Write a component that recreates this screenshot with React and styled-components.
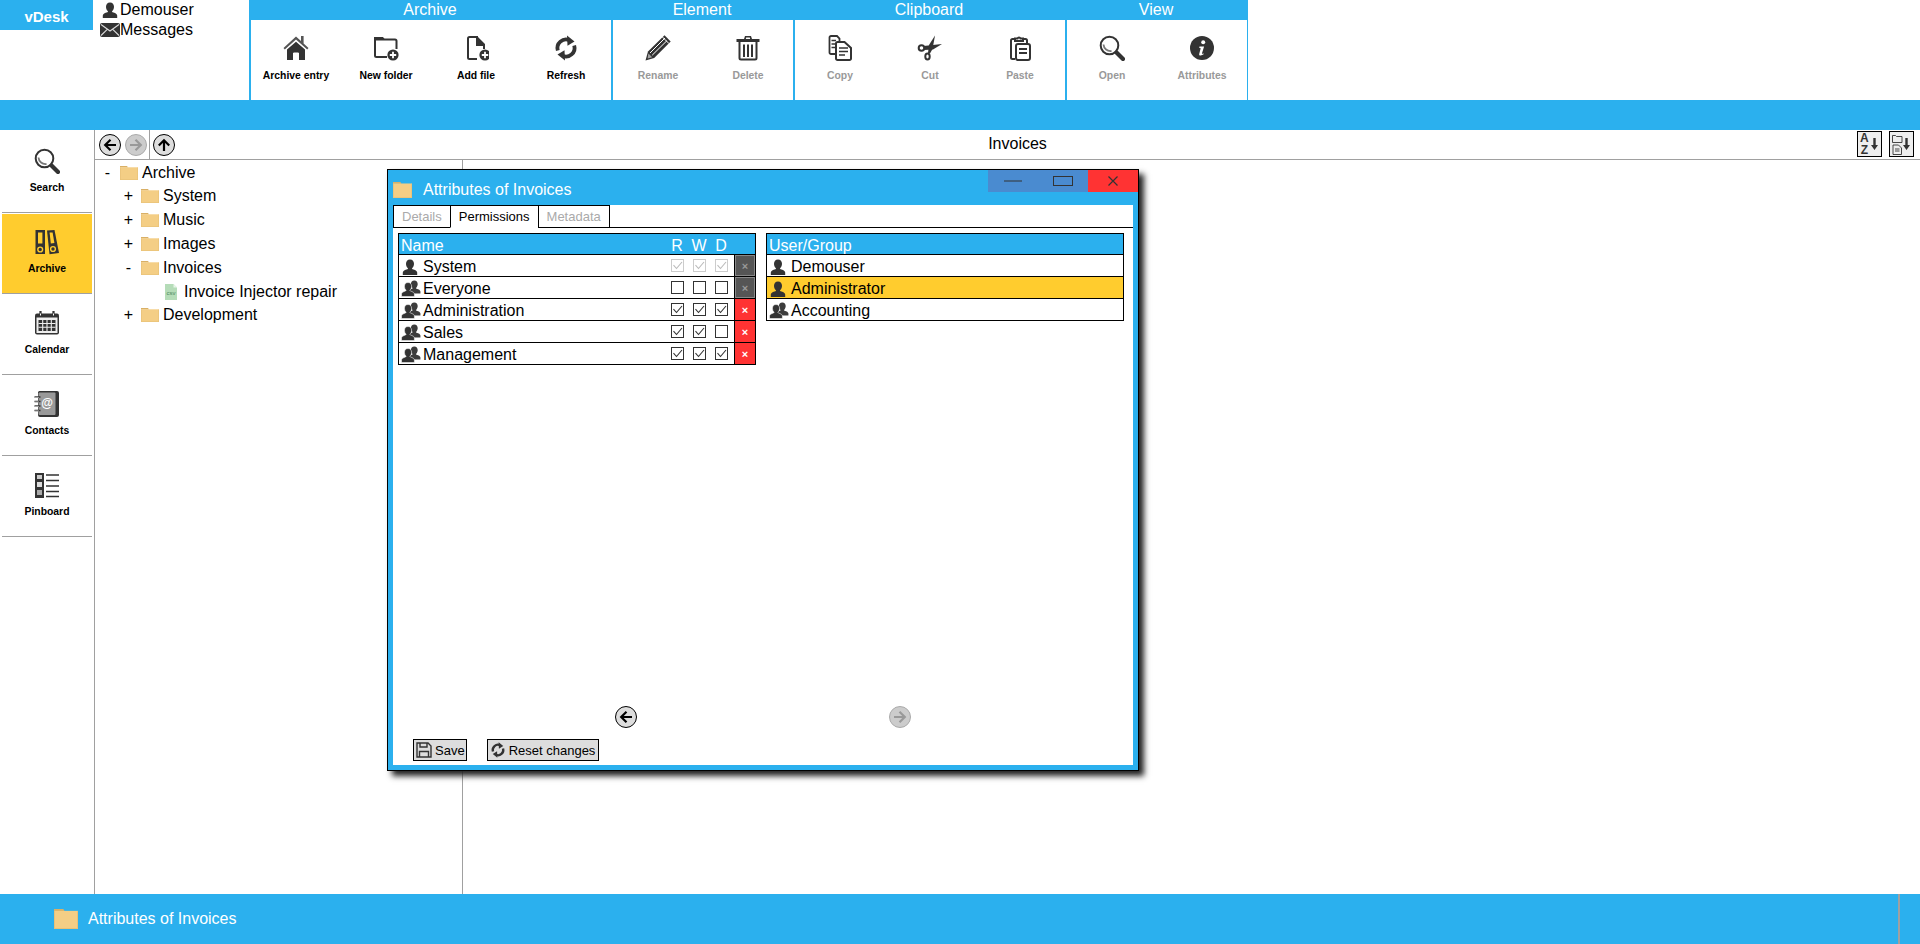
import React from "react";
import styled, { createGlobalStyle } from "styled-components";

const BLUE = "#2bb0ee";
const YELLOW = "#ffcc2e";
const RED = "#ff3333";
const GREY = "#a0a0a0";
const INK = "#333333";

const GlobalStyle = createGlobalStyle`
  html, body {
    margin: 0;
    padding: 0;
    height: 100%;
    background: #fff;
    overflow: hidden;
  }
  body {
    font-family: "Liberation Sans", Arial, sans-serif;
    font-size: 16px;
    color: #000;
  }
  * { box-sizing: border-box; }
`;

const Glyph = styled.svg.attrs((p) => ({
  width: p.$w || p.$size || 26,
  height: p.$size || 26,
  viewBox: p.$box || "0 0 26 26",
}))`
  display: block;
  flex: none;
  color: ${INK};
`;

/* ---- icons ---- */
const HomeIcon = () => (
  <Glyph>
    <path fill="#555" d="M13 1.500 18 6V1h2.600v7.400L25.500 13l-1.300 1.600L13 4.600 1.800 14.600.5 13z" />
    <path fill={INK} d="M4 14.500 13 6.700l9 7.800V25h-6v-7h-6v7H4z" />
    <rect fill="#fff" x="10.500" y="17.500" width="5" height="7.500" />
  </Glyph>
);

const Badge = () => (
  <g>
    <circle cx="20" cy="20" r="5.600" fill={INK} />
    <path stroke="#fff" strokeWidth="1.800" d="M16.800 20h6.400M20 16.800v6.400" />
  </g>
);

const NewFolderIcon = () => (
  <Glyph>
    <path fill={INK} d="M1 2h9l2 2.500H2.600L2 5H1z" />
    <path fill="none" stroke={INK} strokeWidth="2" d="M2 4.500V20.500a1.500 1.500 0 0 0 1.500 1.500H14M2 4.500h20a1.500 1.500 0 0 1 1.500 1.500V14" />
    <Badge />
  </Glyph>
);

const AddFileIcon = () => (
  <Glyph>
    <path fill="none" stroke={INK} strokeWidth="2" d="M15 2H6.500A1.500 1.500 0 0 0 5 3.500v19A1.500 1.500 0 0 0 6.500 24H14" />
    <path fill={INK} d="M13 2h2l7 7v5h-2v-3h-7z" />
    <g transform="translate(2 0)"><Badge /></g>
  </Glyph>
);

const RefreshIcon = ({ size = 26 }) => (
  <Glyph $size={size}>
    <path fill="none" stroke={INK} strokeWidth="3.800" d="M4.800 15.500A8.600 8.600 0 0 1 16.500 5.200" />
    <path fill={INK} d="M14 .5 21.500 6.500 14.500 10.800z" />
    <path fill="none" stroke={INK} strokeWidth="3.800" d="M21.200 10.500A8.600 8.600 0 0 1 9.500 20.800" />
    <path fill={INK} d="M12 25.500 4.500 19.500 11.500 15.200z" />
  </Glyph>
);

const PencilIcon = () => (
  <Glyph>
    <path fill={INK} d="M.5 25.500 3 16.500 19.500 .3 25.700 6.500 9.200 23z" />
    <path stroke="#fff" strokeWidth="1" d="M5 18 20 3M7.200 20.200 22 5.600M17 1.600 24 8.600" />
    <path fill="#fff" d="M3.400 18.400 7.200 22.200 2.600 23.400z" opacity=".55" />
  </Glyph>
);

const TrashIcon = () => (
  <Glyph>
    <path fill={INK} d="M10 1h6l1 3h7.500v3h-23V4H9zm1.200 1.600-.4 1.400h4.400l-.4-1.400z" />
    <path fill="none" stroke={INK} strokeWidth="2" d="M4.500 7V23a1.500 1.500 0 0 0 1.500 1.500h14a1.500 1.500 0 0 0 1.500-1.500V7" />
    <path stroke={INK} strokeWidth="2" d="M9 9.500V22M13 9.500V22M17 9.500V22" />
  </Glyph>
);

const CopyIcon = () => (
  <Glyph>
    <path fill="none" stroke={INK} strokeWidth="1.800" d="M9 19H4a1.500 1.500 0 0 1-1.500-1.500v-15A1.500 1.500 0 0 1 4 1h6l2.500 2.500V7" />
    <path fill="none" stroke={INK} strokeWidth="2" d="M10.500 7h7L24 13v10.500a1.500 1.500 0 0 1-1.500 1.500h-12A1.500 1.500 0 0 1 9 23.500v-15A1.500 1.500 0 0 1 10.500 7z" />
    <path stroke={INK} strokeWidth="1.600" d="M4.500 5.500H9M4.500 9H8M4.500 12.500H8M12 13h9M12 16.500h9M12 20h6" />
  </Glyph>
);

const CutIcon = () => (
  <Glyph>
    <circle cx="4.500" cy="13" r="2.800" fill="none" stroke={INK} strokeWidth="2" />
    <ellipse cx="10.500" cy="21.500" rx="2.200" ry="3" fill="none" stroke={INK} strokeWidth="2" />
    <path fill={INK} d="M6.500 11 25 9 16 14.500 7.200 15z" />
    <path fill={INK} d="M11 18 12 10 18 .5 15.500 14 13 18.500z" />
  </Glyph>
);

const PasteIcon = () => (
  <Glyph>
    <path fill="none" stroke={INK} strokeWidth="2" d="M8 24H5.500A1.500 1.500 0 0 1 4 22.500v-17A1.500 1.500 0 0 1 5.500 4H8M16 4h2.500A1.500 1.500 0 0 1 20 5.500V8" />
    <path fill="none" stroke={INK} strokeWidth="2" d="M8 6V3.500h2.500a1.600 1.600 0 0 1 3 0H16V6z" />
    <rect x="9" y="9" width="14" height="16" rx="2" fill="#fff" stroke={INK} strokeWidth="2" />
    <path stroke={INK} strokeWidth="1.800" d="M12 14h8M12 18h8" />
  </Glyph>
);

const SearchIcon = () => (
  <Glyph>
    <circle cx="10.500" cy="10.500" r="8.800" fill="none" stroke={INK} strokeWidth="2" />
    <path fill="none" stroke="#777" strokeWidth="1.800" d="M4.500 9.500a7 7 0 0 0 8 6.500" />
    <path stroke={INK} strokeWidth="4.200" strokeLinecap="round" d="M17.500 17.500 24 24" />
  </Glyph>
);

const InfoIcon = () => (
  <Glyph>
    <circle cx="13" cy="13" r="12" fill={INK} />
    <circle cx="14.200" cy="7.200" r="2" fill="#fff" />
    <path fill="#fff" d="M10.500 11.500h4.600L13 18.200c-.2.700.3.900 1.500.2l.4.700c-1.800 1.600-5.200 2.300-4.700-.2l1.500-5.700-1.500-.4z" />
  </Glyph>
);

const BinderIcon = () => (
  <Glyph>
    <path fill={INK} d="M1.500 1H11v24H1.500z" />
    <path fill={INK} d="M13 1.500 20.500 1 25 24l-9.500 1.200z" />
    <rect x="4" y="3.500" width="4.400" height="11" fill={YELLOW} />
    <path fill={YELLOW} d="M15.600 3.600 18.600 3.400 20.400 14 16.800 14.400z" />
    <circle cx="6.200" cy="20.500" r="2.400" fill="none" stroke={YELLOW} strokeWidth="1.400" />
    <circle cx="19" cy="20" r="2.400" fill="none" stroke={YELLOW} strokeWidth="1.400" />
  </Glyph>
);

const CalendarIcon = () => (
  <Glyph>
    <rect x="1" y="3.500" width="24" height="21" rx="2" fill={INK} />
    <rect x="2.500" y="7.500" width="21" height="15.500" fill="#eee" />
    <path stroke={INK} strokeWidth="2.200" d="M6.500 1v5M19.500 1v5" />
    <path stroke="#fff" strokeWidth="1" d="M6.500 3.500v2M19.500 3.500v2" />
    <rect x="4.500" y="10" width="17" height="11" fill={INK} />
    <path stroke="#eee" strokeWidth="1.100" d="M4.500 13.500h17M4.500 17.300h17M8.700 10v11M13 10v11M17.300 10v11" />
  </Glyph>
);

const ContactsIcon = () => (
  <Glyph>
    <path fill={INK} d="M4 1.500A1.500 1.500 0 0 1 5.500 0H23a2 2 0 0 1 2 2v22a2 2 0 0 1-2 2H6a2 2 0 0 1-2-2z" />
    <rect x="4.500" y="1.500" width="17" height="22.500" rx="1" fill="#999" />
    <text x="13" y="16" textAnchor="middle" fontSize="12" fontFamily="Liberation Sans" fill="#fff">@</text>
    <path stroke={INK} strokeWidth="1.700" d="M.5 6h6M.5 10.500h6M.5 15h6M.5 19.500h6" />
    <path stroke="#ccc" strokeWidth=".7" d="M1 6.400h4M1 10.900h4M1 15.400h4M1 19.900h4" />
  </Glyph>
);

const PinboardIcon = () => (
  <Glyph>
    <rect x="1" y="1" width="9" height="25" fill={INK} />
    <rect x="3" y="3" width="5" height="4" fill="#ccc" />
    <rect x="3" y="10" width="5" height="5" fill="#ddd" />
    <rect x="3" y="18" width="5" height="5" fill="#aaa" />
    <path stroke={INK} strokeWidth="1.500" d="M12 3h13M12 8.500h13M12 14h13M12 19.500h13M12 24.500h13" />
  </Glyph>
);

const PersonShape = ({ dx = 0, scale = 1, fill = INK }) => (
  <path
    transform={`translate(${dx} 0) scale(${scale})`}
    fill={fill}
    d="M8 .5c2.600 0 4 2 4 4.300 0 1.800-.7 3.300-1.700 4.200-.4.400-.3 1 .3 1.200 2.500.7 4.600 1.700 4.600 3.300V16H.8v-2.500c0-1.600 2.100-2.600 4.600-3.300.6-.2.700-.8.3-1.200C4.700 8.100 4 6.600 4 4.800 4 2.500 5.400.5 8 .5z"
  />
);

const PersonIcon = () => (
  <Glyph $w={22} $size={16} $box="-3 0 22 16">
    <PersonShape />
  </Glyph>
);

const GroupIcon = () => (
  <Glyph $w={22} $size={17} $box="-2 0 22 17">
    <PersonShape dx={6.500} scale={0.85} fill="#3c3c3c" />
    <path transform="translate(0 2.500) scale(1.080)" fill={INK} stroke="#fff" strokeWidth=".5" d="M6.500 0c2.100 0 3.300 1.600 3.300 3.500 0 1.500-.6 2.700-1.400 3.400-.3.300-.2.800.3 1 2 .6 3.700 1.400 3.700 2.600V13H.5v-2.500c0-1.200 1.700-2 3.700-2.600.5-.2.600-.7.3-1C3.700 6.200 3.200 5 3.200 3.500 3.200 1.600 4.400 0 6.500 0z" />
  </Glyph>
);

const MailIcon = () => (
  <Glyph $w={20} $size={14} $box="0 0 20 14">
    <rect width="20" height="14" rx="2" fill={INK} />
    <path fill="none" stroke="#ddd" strokeWidth="1.100" d="M1 1.500 10 8l9-6.500M1 12.500 7.500 6.200M19 12.500 12.500 6.200" />
  </Glyph>
);

const FolderIcon = ({ w = 18, h = 14 }) => (
  <Glyph $w={w} $size={h} $box="0 0 18 14" preserveAspectRatio="none">
    <path fill="#d9b066" d="M0 0h7l1 1.500H0z" />
    <rect y="1.300" width="18" height="12.700" fill="#f4ce85" />
    <path stroke="#e4bc72" strokeWidth=".6" fill="none" d="M.3 1.500v12.200h17.400V1.500" />
  </Glyph>
);

const CsvIcon = () => (
  <Glyph $w={12} $size={16} $box="0 0 12 16">
    <path fill="#b5dcb8" d="M0 0h8.500L12 3.500V16H0z" />
    <path fill="#e8f5e8" d="M8.500 0 12 3.500H8.500z" />
    <text x="6" y="10.500" textAnchor="middle" fontSize="6" fontFamily="Liberation Sans" fill="#4d8a60">csv</text>
  </Glyph>
);

const ArrowIcon = ({ dir, color }) => {
  const angle = { left: 0, right: 180, up: 90 }[dir];
  return (
    <Glyph $size={14} $box="0 0 14 14">
      <g transform={`rotate(${angle} 7 7)`} fill="none" stroke={color} strokeWidth="2.200">
        <path d="M2 7h11M7.500 1.800 2.200 7l5.300 5.200" />
      </g>
    </Glyph>
  );
};

const CheckMark = ({ color }) => (
  <Glyph $size={11} $box="0 0 11 11">
    <path fill="none" stroke={color} strokeWidth="1.100" d="M1.500 5.200 4.500 8.500 10 2" />
  </Glyph>
);

const FloppyIcon = () => (
  <Glyph $size={16} $box="0 0 16 16">
    <path fill="none" stroke={INK} strokeWidth="1.400" d="M1 1h11l3 3v11H1z" />
    <path fill="none" stroke={INK} strokeWidth="1.400" d="M4 1v4h7V1M3.500 15V9.500h9V15" />
  </Glyph>
);

const SortArrow = () => (
  <Glyph $w={7} $size={12} $box="0 0 7 12">
    <path fill={INK} d="M2.300 0h2.400v7H7l-3.500 5L0 7h2.300z" />
  </Glyph>
);

const TypeStack = () => (
  <Glyph $w={11} $size={22} $box="0 0 11 22">
    <path fill="none" stroke={INK} strokeWidth=".9" d="M.5 2.500V9.500h9.500V3.500H4.500l-1-1z" />
    <path fill="none" stroke={INK} strokeWidth=".9" d="M1 12h5.500L9.500 15v6.500H1z" />
    <path stroke={INK} strokeWidth=".9" d="M3 16h4.500M3 18h4.500" />
  </Glyph>
);

/* ---- header ---- */
const Page = styled.div`
  display: flex;
  flex-direction: column;
  height: 100vh;
  position: relative;
`;

const Header = styled.header`
  display: flex;
  height: 100px;
  flex: none;
`;

const Brand = styled.div`
  width: 93px;
  height: 30px;
  background: ${BLUE};
  color: #fff;
  font-weight: bold;
  font-size: 15px;
  line-height: 33px;
  text-align: center;
`;

const UserBox = styled.div`
  width: 156px;
  padding-left: 7px;
`;

const UserLine = styled.div`
  display: flex;
  align-items: center;
  height: 20px;
  line-height: 20px;
  gap: ${(p) => (p.$mail ? "0" : "2px")};
  padding-left: ${(p) => (p.$mail ? "0" : "2px")};
`;

const Ribbon = styled.div`
  display: flex;
`;

const RibbonGroup = styled.section`
  display: flex;
  flex-direction: column;
`;

const GroupTitle = styled.div`
  height: 20px;
  background: ${BLUE};
  color: #fff;
  line-height: 19px;
  text-align: center;
`;

const GroupBody = styled.div`
  display: flex;
  flex: 1;
  border-left: 2px solid ${BLUE};
`;

const RibbonButton = styled.div`
  width: 90px;
  display: flex;
  flex-direction: column;
  align-items: center;
  padding-top: 15px;
  font-size: 10.4px;
  font-weight: bold;
  color: ${(p) => (p.$off ? "#999" : "#000")};
`;

const RibbonLabel = styled.span`
  margin-top: 9px;
  line-height: 12px;
  white-space: nowrap;
`;

const RibbonEnd = styled.div`
  width: 1px;
  background: ${BLUE};
`;

const BlueBar = styled.div`
  height: 30px;
  flex: none;
  background: ${BLUE};
`;

/* ---- main ---- */
const Main = styled.div`
  flex: 1;
  display: flex;
  min-height: 0;
`;

const Sidebar = styled.nav`
  width: 95px;
  flex: none;
  padding: 3px 2px 0;
  border-right: 1px solid ${GREY};
`;

const SideItem = styled.div`
  height: 80px;
  width: 90px;
  margin-bottom: 1px;
  display: flex;
  flex-direction: column;
  align-items: center;
  padding-top: 15px;
  border-bottom: 1px solid ${GREY};
  background: ${(p) => (p.$active ? YELLOW : "transparent")};
  font-size: 10.4px;
  font-weight: bold;
`;

const SideLabel = styled.span`
  margin-top: 8px;
  line-height: 12px;
`;

const Content = styled.div`
  flex: 1;
  display: flex;
  flex-direction: column;
  min-width: 0;
`;

const NavBar = styled.div`
  height: 30px;
  flex: none;
  display: grid;
  grid-template-columns: 90px 1fr 70px;
  border-bottom: 1px solid ${GREY};
`;

const NavLeft = styled.div`
  display: flex;
  align-items: center;
  gap: 4px;
  padding-left: 4px;
`;

const NavDivider = styled.span`
  width: 1px;
  height: 100%;
  margin: 0 -1px 0 -2px;
  background: ${GREY};
`;

const RoundButton = styled.span`
  width: 22px;
  height: 22px;
  border-radius: 50%;
  display: flex;
  align-items: center;
  justify-content: center;
  flex: none;
  background: ${(p) => (p.$off ? "#ccc" : "#ddd")};
  border: 1.5px solid ${(p) => (p.$off ? "#aaa" : "#000")};
`;

const NavTitle = styled.div`
  text-align: center;
  line-height: 28px;
`;

const NavRight = styled.div`
  display: flex;
  gap: 7px;
  padding: 1px 0 0 7px;
`;

const SortButton = styled.span`
  width: 25px;
  height: 26px;
  display: flex;
  align-items: center;
  justify-content: space-between;
  padding: 0 3px 0 2px;
  background: #eee;
  border: 1px solid #000;
`;

const SortLetters = styled.span`
  font-size: 12px;
  font-weight: bold;
  line-height: 12px;
  color: ${INK};
  text-align: center;
`;

const Panels = styled.div`
  flex: 1;
  display: flex;
  min-height: 0;
`;

const Tree = styled.div`
  width: 368px;
  flex: none;
  padding-top: 0.8px;
  border-right: 1px solid ${GREY};
`;

const TreeRow = styled.div`
  display: flex;
  align-items: center;
  height: 23.8px;
  padding-left: ${(p) => p.$depth * 21}px;
`;

const Toggle = styled.span`
  width: 25px;
  flex: none;
  text-align: center;
`;

const TreeIcon = styled.span`
  width: 18px;
  flex: none;
  margin-right: 4px;
  display: flex;
  justify-content: center;
`;

const StatusBar = styled.footer`
  height: 50px;
  flex: none;
  background: ${BLUE};
  color: #fff;
  display: flex;
  align-items: center;
  gap: 10px;
  padding: 0 20px 0 54px;
`;

const StatusSpacer = styled.span`
  flex: 1;
`;

const StatusDivider = styled.span`
  width: 2px;
  height: 100%;
  background: ${GREY};
`;

/* ---- dialog ---- */
const Dialog = styled.div`
  position: absolute;
  left: 387px;
  top: 169px;
  width: 752px;
  height: 602px;
  display: flex;
  flex-direction: column;
  padding: 0 5px 5px;
  background: ${BLUE};
  border: 1px solid #000;
  box-shadow: 5px 5px 6px #222;
`;

const TitleBar = styled.div`
  height: 35px;
  flex: none;
  display: flex;
  align-items: flex-start;
  margin-right: -5px;
  color: #fff;
`;

const TitleText = styled.div`
  flex: 1;
  display: flex;
  align-items: center;
  gap: 11px;
  height: 100%;
  padding-top: 4px;
`;

const WindowButton = styled.span`
  width: 50px;
  height: 22px;
  display: flex;
  align-items: center;
  justify-content: center;
  background: ${(p) => (p.$close ? RED : "#4a8bd0")};
`;

const DialogBody = styled.div`
  flex: 1;
  display: flex;
  flex-direction: column;
  padding-bottom: 4px;
  background: #fff;
  min-height: 0;
`;

const Tabs = styled.div`
  display: flex;
  height: 23px;
  flex: none;
  border-bottom: 1px solid #000;
`;

const Tab = styled.span`
  height: 23px;
  padding: 0 8px;
  margin-right: -1px;
  font-size: 13px;
  line-height: 22px;
  border: 1px solid #000;
  border-bottom-color: ${(p) => (p.$active ? "#fff" : "#000")};
  background: #fff;
  color: ${(p) => (p.$active ? "#000" : "#aaa")};
`;

const Tables = styled.div`
  flex: 1;
  display: flex;
  align-items: flex-start;
  gap: 10px;
  padding: 5px 0 0 5px;
`;

const Table = styled.div`
  width: 358px;
  border: 1px solid #000;
  border-bottom: 0;
`;

const Row = styled.div`
  display: grid;
  grid-template-columns: ${(p) => (p.$perms ? "1fr repeat(3, 22px) 23px" : "1fr")};
  grid-template-rows: minmax(0, 1fr);
  height: ${(p) => (p.$head ? 21 : 22)}px;
  border-bottom: 1px solid #000;
  background: ${(p) => (p.$head ? BLUE : p.$selected ? YELLOW : "#fff")};
  color: ${(p) => (p.$head ? "#fff" : "#000")};
`;

const HeadCell = styled.span`
  line-height: 23px;
  padding-left: ${(p) => (p.$center ? 0 : 2)}px;
  text-align: ${(p) => (p.$center ? "center" : "left")};
`;

const NameCell = styled.span`
  display: flex;
  align-items: center;
  gap: 2px;
  padding-top: 2px;
  line-height: 19px;
`;

const CheckCell = styled.span`
  display: flex;
  align-items: center;
  justify-content: center;
`;

const Check = styled.span`
  width: 13px;
  height: 13px;
  display: flex;
  align-items: center;
  justify-content: center;
  border: 1px solid ${(p) => (p.$off ? "#ccc" : INK)};
`;

const RemoveButton = styled.span`
  display: flex;
  align-items: center;
  justify-content: center;
  margin-left: 2px;
  border-left: 1px solid #000;
  background: ${(p) => (p.$off ? "#555" : RED)};
  color: ${(p) => (p.$off ? "#999" : "#fff")};
  box-shadow: ${(p) => (p.$off ? `inset 0 0 0 1px #888` : "none")};
  font-size: 11px;
  font-weight: bold;
`;

const ArrowRow = styled.div`
  display: flex;
  justify-content: space-between;
  padding: 0 222px;
  margin-bottom: 11px;
`;

const Footer = styled.div`
  display: flex;
  gap: 20px;
  padding-left: 20px;
`;

const ActionButton = styled.span`
  height: 22px;
  display: flex;
  align-items: center;
  gap: 3px;
  padding: 0 ${(p) => (p.$wide ? 3 : 1)}px 0 2px;
  background: #ddd;
  border: 1px solid #000;
  font-size: 13px;
`;

/* ---- data ---- */
const ribbon = [
  {
    title: "Archive",
    items: [
      ["Archive entry", HomeIcon],
      ["New folder", NewFolderIcon],
      ["Add file", AddFileIcon],
      ["Refresh", RefreshIcon],
    ],
  },
  { title: "Element", off: true, items: [["Rename", PencilIcon], ["Delete", TrashIcon]] },
  { title: "Clipboard", off: true, items: [["Copy", CopyIcon], ["Cut", CutIcon], ["Paste", PasteIcon]] },
  { title: "View", off: true, items: [["Open", SearchIcon], ["Attributes", InfoIcon]] },
];

const sideItems = [
  ["Search", SearchIcon],
  ["Archive", BinderIcon, true],
  ["Calendar", CalendarIcon],
  ["Contacts", ContactsIcon],
  ["Pinboard", PinboardIcon],
];

const treeRows = [
  { name: "Archive", depth: 0, toggle: "-" },
  { name: "System", depth: 1, toggle: "+" },
  { name: "Music", depth: 1, toggle: "+" },
  { name: "Images", depth: 1, toggle: "+" },
  { name: "Invoices", depth: 1, toggle: "-" },
  { name: "Invoice Injector repair", depth: 2, file: true },
  { name: "Development", depth: 1, toggle: "+" },
];

const permissions = [
  { name: "System", single: true, r: 1, w: 1, d: 1, locked: true },
  { name: "Everyone", r: 0, w: 0, d: 0, locked: true, open: true },
  { name: "Administration", r: 1, w: 1, d: 1 },
  { name: "Sales", r: 1, w: 1, d: 0 },
  { name: "Management", r: 1, w: 1, d: 1 },
];

const people = [
  { name: "Demouser", single: true },
  { name: "Administrator", single: true, selected: true },
  { name: "Accounting" },
];

const CheckBox = ({ on, off }) => (
  <CheckCell>
    <Check $off={off}>{on ? <CheckMark color={off ? "#bbb" : INK} /> : null}</Check>
  </CheckCell>
);

export default function App() {
  return (
    <Page>
      <GlobalStyle />
      <Header>
        <Brand>vDesk</Brand>
        <UserBox>
          <UserLine>
            <Glyph $w={16} $size={16} $box="0 0 16 16"><PersonShape /></Glyph>
            Demouser
          </UserLine>
          <UserLine $mail>
            <MailIcon />
            Messages
          </UserLine>
        </UserBox>
        <Ribbon>
          {ribbon.map((group) => (
            <RibbonGroup key={group.title}>
              <GroupTitle>{group.title}</GroupTitle>
              <GroupBody>
                {group.items.map(([label, Icon]) => (
                  <RibbonButton key={label} $off={group.off}>
                    <Icon />
                    <RibbonLabel>{label}</RibbonLabel>
                  </RibbonButton>
                ))}
              </GroupBody>
            </RibbonGroup>
          ))}
          <RibbonEnd />
        </Ribbon>
      </Header>
      <BlueBar />
      <Main>
        <Sidebar>
          {sideItems.map(([label, Icon, active]) => (
            <SideItem key={label} $active={active}>
              <Icon />
              <SideLabel>{label}</SideLabel>
            </SideItem>
          ))}
        </Sidebar>
        <Content>
          <NavBar>
            <NavLeft>
              <RoundButton><ArrowIcon dir="left" color="#000" /></RoundButton>
              <RoundButton $off><ArrowIcon dir="right" color="#999" /></RoundButton>
              <NavDivider />
              <RoundButton><ArrowIcon dir="up" color="#000" /></RoundButton>
            </NavLeft>
            <NavTitle>Invoices</NavTitle>
            <NavRight>
              <SortButton>
                <SortLetters>A<br />Z</SortLetters>
                <SortArrow />
              </SortButton>
              <SortButton>
                <TypeStack />
                <SortArrow />
              </SortButton>
            </NavRight>
          </NavBar>
          <Panels>
            <Tree>
              {treeRows.map((row) => (
                <TreeRow key={row.name} $depth={row.depth}>
                  <Toggle>{row.toggle}</Toggle>
                  <TreeIcon>{row.file ? <CsvIcon /> : <FolderIcon />}</TreeIcon>
                  {row.name}
                </TreeRow>
              ))}
            </Tree>
          </Panels>
        </Content>
      </Main>
      <StatusBar>
        <FolderIcon w={24} h={20} />
        Attributes of Invoices
        <StatusSpacer />
        <StatusDivider />
      </StatusBar>

      <Dialog>
        <TitleBar>
          <TitleText>
            <FolderIcon w={19} h={16} />
            Attributes of Invoices
          </TitleText>
          <WindowButton>
            <Glyph $w={20} $size={10} $box="0 0 20 10"><path stroke={INK} strokeWidth="1" d="M1 5h18" /></Glyph>
          </WindowButton>
          <WindowButton>
            <Glyph $w={20} $size={10} $box="0 0 20 10"><rect x=".5" y=".5" width="19" height="9" fill="none" stroke={INK} /></Glyph>
          </WindowButton>
          <WindowButton $close>
            <Glyph $size={10} $box="0 0 10 10"><path stroke={INK} strokeWidth="1.200" d="M.5.5l9 9M9.500.5l-9 9" /></Glyph>
          </WindowButton>
        </TitleBar>
        <DialogBody>
          <Tabs>
            <Tab>Details</Tab>
            <Tab $active>Permissions</Tab>
            <Tab>Metadata</Tab>
          </Tabs>
          <Tables>
            <Table>
              <Row $head $perms>
                <HeadCell>Name</HeadCell>
                <HeadCell $center>R</HeadCell>
                <HeadCell $center>W</HeadCell>
                <HeadCell $center>D</HeadCell>
                <span />
              </Row>
              {permissions.map((p) => (
                <Row key={p.name} $perms>
                  <NameCell>
                    {p.single ? <PersonIcon /> : <GroupIcon />}
                    {p.name}
                  </NameCell>
                  <CheckBox on={p.r} off={p.locked && !p.open} />
                  <CheckBox on={p.w} off={p.locked && !p.open} />
                  <CheckBox on={p.d} off={p.locked && !p.open} />
                  <RemoveButton $off={p.locked}>×</RemoveButton>
                </Row>
              ))}
            </Table>
            <Table>
              <Row $head>
                <HeadCell>User/Group</HeadCell>
              </Row>
              {people.map((p) => (
                <Row key={p.name} $selected={p.selected}>
                  <NameCell>
                    {p.single ? <PersonIcon /> : <GroupIcon />}
                    {p.name}
                  </NameCell>
                </Row>
              ))}
            </Table>
          </Tables>
          <ArrowRow>
            <RoundButton><ArrowIcon dir="left" color="#000" /></RoundButton>
            <RoundButton $off><ArrowIcon dir="right" color="#999" /></RoundButton>
          </ArrowRow>
          <Footer>
            <ActionButton><FloppyIcon />Save</ActionButton>
            <ActionButton $wide><RefreshIcon size={16} />Reset changes</ActionButton>
          </Footer>
        </DialogBody>
      </Dialog>
    </Page>
  );
}
